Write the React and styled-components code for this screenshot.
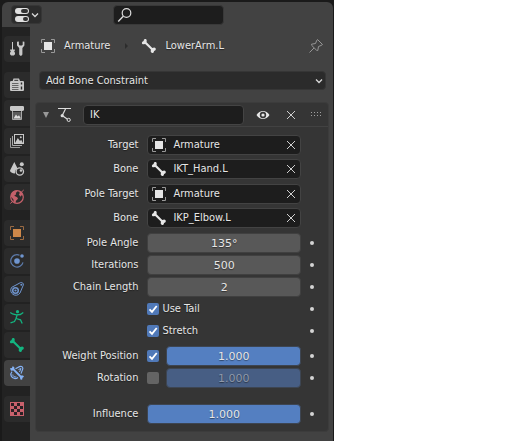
import React, { useState } from "react";
import styled, { createGlobalStyle, css } from "styled-components";

const GlobalStyle = createGlobalStyle`
  *, *::before, *::after { box-sizing: border-box; }
  body { margin: 0; background: #fff; }
  button, input { font: inherit; color: inherit; }
`;

const textShadow = "0 1px 1px rgba(0, 0, 0, 0.45)";

const Page = styled.div`
  display: grid;
  grid-template-columns: minmax(0, 7fr) minmax(0, 4fr);
  min-height: 100vh;
  font: 11px/14px "DejaVu Sans Condensed", "DejaVu Sans", sans-serif;
  color: #e6e6e6;
  text-shadow: ${textShadow};
`;

const Editor = styled.section`
  display: flex;
  flex-direction: column;
  padding: 2px 1px 0 2px;
  background: #1a1a1a;
`;

const Header = styled.header`
  display: flex;
  align-items: center;
  justify-content: space-between;
  height: 25px;
  padding: 0 109px 0 9px;
  background: #424242;
  border-radius: 6px 6px 0 0;
`;

const EditorButton = styled.button`
  display: flex;
  align-items: center;
  gap: 0;
  height: 19px;
  padding: 0 1px 0 2px;
  background: #2b2b2b;
  border: 1px solid #363636;
  border-radius: 4px;
`;

const Search = styled.label`
  display: flex;
  align-items: center;
  width: 111px;
  height: 20px;
  padding: 0 3px;
  background: #1d1d1d;
  border: 1px solid #393939;
  border-radius: 4px;
`;

const TextInput = styled.input`
  flex: 1;
  min-width: 0;
  width: 100%;
  padding: 0;
  border: 0;
  outline: 0;
  background: transparent;
  text-shadow: ${textShadow};
`;

const Body = styled.div`
  flex: 1;
  display: flex;
`;

const Tabs = styled.nav`
  display: flex;
  flex-direction: column;
  gap: 10px;
  width: 28px;
  padding: 9px 0 0 2px;
  background: #222;
`;

const TabGroup = styled.div`
  display: flex;
  flex-direction: column;
  gap: 2px;
`;

const Tab = styled.button`
  display: flex;
  align-items: center;
  height: 26px;
  padding: 0 5px;
  border: 0;
  border-radius: 4px 0 0 4px;
  background: ${(p) => (p.$active ? "#424242" : "#2b2b2b")};
`;

const Main = styled.main`
  flex: 1;
  min-width: 0;
  padding: 10px 4px 9px 5px;
  background: #424242;
`;

const Breadcrumb = styled.div`
  display: flex;
  align-items: center;
  height: 18px;
  padding: 0 5px;
`;

const Crumb = styled.span`
  display: flex;
  align-items: center;
  gap: 8px;
`;

const Separator = styled.span`
  display: flex;
  padding: 0 11px 0 12px;
`;

const IconButton = styled.button`
  display: flex;
  align-items: center;
  justify-content: center;
  padding: 0;
  border: 0;
  background: transparent;
  margin-left: ${(p) => (p.$end ? "auto" : "0")};
`;

const AddButton = styled.button`
  display: flex;
  align-items: center;
  justify-content: space-between;
  width: calc(100% - 7px);
  height: 19px;
  margin: 16px 3px 12px 4px;
  padding: 0 1px 0 6px;
  background: #2b2b2b;
  border: 1px solid #363636;
  border-radius: 4px;
  text-shadow: ${textShadow};
`;

const Panel = styled.section`
  background: #353535;
  border: 1px solid #3c3c3c;
  border-radius: 4px;
`;

const PanelHeader = styled.div`
  display: flex;
  align-items: center;
  height: 24px;
  padding: 0 5px 0 6px;
  border-bottom: 1px solid #424242;
`;

const ConstraintType = styled.span`
  display: flex;
  margin-left: 7px;
`;

const NameField = styled.label`
  flex: 1;
  display: flex;
  height: 20px;
  margin: 0 11px 0 10px;
  padding: 0 6px;
  background: #1d1d1d;
  border: 1px solid #444;
  border-radius: 4px;
`;

const PanelActions = styled.div`
  display: flex;
  align-items: center;
  gap: 15px;
`;

const PanelBody = styled.div`
  display: flex;
  flex-direction: column;
  padding: 6px 0;
`;

const RowGroup = styled.div`
  display: flex;
  flex-direction: column;
  margin-bottom: ${(p) => p.$after || 0}px;
`;

const Row = styled.div`
  display: grid;
  grid-template-columns: minmax(0, 2fr) minmax(0, 3fr) 18px;
  column-gap: 9px;
  align-items: center;
  height: ${(p) => (p.$tall ? 24 : 22)}px;
`;

const RowLabel = styled.label`
  text-align: right;
  white-space: nowrap;
`;

const Control = styled.div`
  display: flex;
  align-items: center;
  gap: ${(p) => p.$gap || 3}px;
  height: 20px;
`;

const boxed = css`
  flex: 1;
  min-width: 0;
  height: 20px;
  border: 1px solid #434343;
  border-radius: 4px;
`;

const ObjectField = styled.div`
  ${boxed}
  display: flex;
  align-items: center;
  gap: 6px;
  padding: 0 4px 0 3px;
  background: #1d1d1d;
`;

const NumberInput = styled.input`
  ${boxed}
  padding: 0;
  outline: 0;
  text-align: center;
  font-family: "DejaVu Sans", sans-serif;
  text-shadow: ${textShadow};
  background: ${(p) => (p.$slider ? "#547fc1" : "#585858")};
  border-color: ${(p) => (p.$slider ? "#3d4552" : "#404040")};
  color: #e6e6e6;
  &:disabled {
    background: #475e84;
    color: #8f99aa;
  }
`;

const Check = styled.input`
  appearance: none;
  flex: none;
  width: 12px;
  height: 12px;
  margin: 0;
  border-radius: 2px;
  background: #646464;
  &:checked {
    background: #5079b8
      url("data:image/svg+xml,%3Csvg xmlns='http://www.w3.org/2000/svg' viewBox='0 0 12 12'%3E%3Cpath d='M2.5 6.3 5 8.8 9.7 3' fill='none' stroke='white' stroke-width='1.8'/%3E%3C/svg%3E");
  }
`;

const Dot = styled.span`
  width: 4px;
  height: 4px;
  border-radius: 50%;
  background: #d4d4d4;
`;

const Svg = ({ children, size = 16, color = "#c8c8c8" }) => (
  <svg width={size} height={size} viewBox={`0 0 ${size} ${size}`} fill="none" stroke={color} color={color} aria-hidden="true">
    {children}
  </svg>
);

const solid = { fill: "currentColor", stroke: "none" };

const ToolIcon = () => (
  <Svg>
    <path d="M3.500 1v8" />
    <path {...solid} d="M1.200 8.500h4.600v1.300l-.7.8.9 1.200v1.400L4.800 14.500H2.200L1 13.200v-1.400l.9-1.200-.7-.8z" />
    <path {...solid} d="M8 .8v3.700L10.200 7v6.500l1 1.200h1.200l1-1.200V7l2-2.500V.8L13.700.5v3.300l-.8.7h-2.200l-.8-.7V.5z" />
  </Svg>
);

const RenderIcon = () => (
  <Svg>
    <path {...solid} d="M4.500 1.500H10l1 2.500h3.200l.8.8v8.500l-.8.8H1.800l-.8-.8V4.800l.8-.8h1.900z" />
    <path d="M5.300 3.300h3.900" stroke="#2b2b2b" />
    <path d="M3 6.500h6.500M3 8.500h6.500M3 10.500h6.500M3 12.500h6.500" stroke="#666" />
    <path d="M12.500 5.500v2M12.500 9.500v3" stroke="#2b2b2b" strokeWidth="1.400" />
  </Svg>
);

const OutputIcon = () => (
  <Svg>
    <path {...solid} d="M1.700 1h12.600l.7.7v3.600l-1.500.7h-11L1 5.300V1.700z" />
    <path d="M3.500 6v8.500h9V6" fill="#5a5a5a" stroke="#a8a8a8" />
    <path d="M4.500 13.500l2.500-4 1.500 2 1.500-1.300 2 3.300z" fill="#ddd" stroke="none" />
    <path d="M4 6.500h8" stroke="#2b2b2b" />
  </Svg>
);

const LayerIcon = () => (
  <Svg>
    <path d="M1.500 5v9.500H11" stroke="#999" />
    <path d="M3.500 3v9.500H13" stroke="#aaa" />
    <rect x="5.500" y="1.500" width="9" height="9" />
    <path {...solid} d="M6 10l2.800-5 2.200 3 1.200-1.200L14 10z" />
    <circle {...solid} cx="11.800" cy="4.300" r="1" />
  </Svg>
);

const SceneIcon = () => (
  <Svg>
    <path {...solid} d="M5.300 1 1 9.500c0 1.700 2.200 2.900 5 2.900C6 9.500 7 8.200 8.600 7.500z" />
    <circle {...solid} cx="12.800" cy="3.300" r="2" />
    <circle cx="10.800" cy="10.500" r="3.700" strokeWidth="1.300" />
    <circle {...solid} cx="12" cy="9.500" r="1.300" />
  </Svg>
);

const WorldIcon = () => (
  <Svg color="#c4606a">
    <circle cx="8" cy="8" r="6.300" strokeWidth="1.200" />
    <path {...solid} d="M2 5.500 4.500 2.300l2.700-.8 1.300 1.300-1.700 1 .4 1.500-2 1.500 3 1.400.8 1.500-2 2-.6 2.500-1.500-.6-.6-3.300L2 7.800z" />
    <path {...solid} d="M10.500 2l2.500 1.500 1.300 3.200-1.800-.4-.8 1.500-1.800-2 .7-1.500z" />
    <path d="M12 3.500 14.700 1M1.300 14.500 3.800 12.300" />
  </Svg>
);

const ObjectIcon = ({ color = "#e6e6e6", frame = "#999" }) => (
  <Svg color={color}>
    <path d="M1.500 5V1.500H5M11 1.500h3.500V5M14.500 11v3.500H11M5 14.500H1.500V11" stroke={frame} />
    <rect {...solid} x="4" y="4" width="8" height="8" />
  </Svg>
);

const PhysicsIcon = () => (
  <Svg color="#6f95cf">
    <path d="M10.500 2.200A6.200 6.200 0 1 0 14 9.300" stroke="#5d7bab" strokeWidth="1.200" />
    <circle {...solid} cx="8" cy="8" r="2.800" />
    <circle {...solid} cx="13" cy="3" r="1.800" />
  </Svg>
);

const ConstraintIcon = () => (
  <Svg color="#6f95cf">
    <circle cx="6.500" cy="9.500" r="2.800" strokeWidth="1.500" />
    <circle {...solid} cx="6.500" cy="9.500" r="1.100" />
    <path d="M2.600 6.400 11.500 1.600c1.700-.5 3.200.7 2.800 2.500L11 12A5 5 0 1 1 2.600 6.400z" />
    <circle {...solid} cx="12.300" cy="3.700" r="1" />
  </Svg>
);

const ArmatureIcon = () => (
  <Svg color="#13b580">
    <circle {...solid} cx="8.500" cy="2.700" r="1.600" />
    <path d="M1.300 3.500 3.500 5l3.800.8 4-.3 3-2M8.300 5.500 7 9.500l-1.500 3-4 1.300M7 9.500l4.500 1.300 1.700 3.700" strokeWidth="1.300" />
  </Svg>
);

const BoneIcon = ({ color = "#e6e6e6" }) => (
  <Svg color={color}>
    <path
      {...solid}
      d="M2.800 2.600C2.600.8 5.400.5 5.700 2.300L5.600 4.200l5.700 5.700 1.900-.3c2 .2 2.200 2.700.4 3.200l-.6.200-.1.700c-.3 1.900-3 1.700-3.200-.1l.2-2L4.200 6l-1.700.3C.5 6.200.4 3.600 2.300 3.200z"
    />
  </Svg>
);

const BoneConstraintIcon = () => (
  <Svg color="#86b3f5">
    <path
      {...solid}
      d="M1 3.200 3 3l.5-1.800 1.700.7.2 2L12 10.500l2-.1 1 1.300-1.500 1-.4 2-1.700-.2-.5-2.200-6.600-6.700L2 5.800z"
    />
    <path d="M6.500 3.700 10.500 1.600c2.300-.9 4 .7 3.100 2.800L12 8.600M3 6.600C.6 9.300 2.300 13.500 6 13.600c1.200 0 2.200-.4 3-1.100" strokeWidth="1.200" />
    <path d="M9.500 4.500 12 3.500 10.500 7M3.800 9.500a2.500 2.500 0 0 0 3.500 2.300" />
  </Svg>
);

const TextureIcon = () => (
  <Svg>
    <rect x="1" y="1" width="14" height="14" fill="#c9616c" stroke="none" />
    {[0, 1, 2, 3].flatMap((r) =>
      [0, 1, 2, 3].map((c) =>
        (r + c) % 2 ? null : <rect key={`${r}${c}`} x={2 + c * 3} y={2 + r * 3} width="3" height="3" fill="#2b2024" stroke="none" />
      )
    )}
  </Svg>
);

const EditorIcon = () => (
  <Svg>
    <rect x="1" y="1" width="14" height="6" rx="3" fill="#e0e0e0" stroke="none" />
    <rect x="7" y="2" width="7" height="4" rx="2" fill="#333" stroke="none" />
    <rect x="1" y="9" width="14" height="6" rx="3" fill="#e0e0e0" stroke="none" />
    <rect x="9" y="10" width="5" height="4" rx="2" fill="#333" stroke="none" />
  </Svg>
);

const SearchIcon = () => (
  <Svg color="#dcdcdc">
    <circle cx="9.500" cy="6" r="4.300" strokeWidth="1.200" />
    <path d="M6.300 9.200 1.200 14.500" strokeWidth="1.400" />
  </Svg>
);

const ChevronIcon = () => (
  <Svg size={10} color="#d8d8d8">
    <path d="M2 3.500 5 6.500 8 3.500" strokeWidth="1.300" />
  </Svg>
);

const PinIcon = () => (
  <Svg color="#969696">
    <path d="M9.500 1.500 14.500 6.500 13 7.500 10.500 8.500 9.800 12.500 8.500 12.200 3.800 7.500 3.500 6.200 7.500 5.500 8.500 3zM6 10 1.500 14.500" />
  </Svg>
);

const CrossIcon = () => (
  <Svg size={10} color="#cfcfcf">
    <path d="M1 1l8 8M9 1L1 9" />
  </Svg>
);

const IkIcon = () => (
  <Svg color="#dcdcdc">
    <path d="M1 1.500h13" />
    <path d="M8.500 2 5.200 8.500l5.300 3.700" strokeWidth="1.200" />
    <circle {...solid} cx="5.200" cy="8.700" r="1.600" />
    <circle cx="11.700" cy="12.900" r="1.600" />
  </Svg>
);

const EyeIcon = () => (
  <Svg color="#e6e6e6">
    <path {...solid} fillRule="evenodd" d="M1.500 8C4.700 2.700 11.300 2.700 14.500 8 11.300 13.300 4.700 13.300 1.500 8zM8 4.800a3.200 3.200 0 1 0 0 6.400 3.200 3.200 0 1 0 0-6.400z" />
    <circle {...solid} cx="8" cy="8" r="1.600" />
  </Svg>
);

const GripIcon = () => (
  <svg width="12" height="8" viewBox="0 0 12 8" fill="#a0a0a0" aria-hidden="true">
    {[0, 3, 6, 9].flatMap((x) => [1, 4].map((y) => <rect key={`${x}${y}`} x={x} y={y} width="1" height="1" />))}
  </svg>
);

const TriangleIcon = ({ right }) => (
  <svg width="8" height="8" viewBox="0 0 8 8" fill={right ? "#2c2c2c" : "#989898"} aria-hidden="true">
    <path d={right ? "M3 1 6 4 3 7z" : "M1 1h6L4 7z"} />
  </svg>
);

const TAB_GROUPS = [
  [["Tool", <ToolIcon />]],
  [
    ["Render", <RenderIcon />],
    ["Output", <OutputIcon />],
    ["View Layer", <LayerIcon />],
    ["Scene", <SceneIcon />],
    ["World", <WorldIcon />],
  ],
  [
    ["Object", <ObjectIcon color="#cf8849" frame="#9a6a42" />],
    ["Physics", <PhysicsIcon />],
    ["Object Constraints", <ConstraintIcon />],
    ["Armature Data", <ArmatureIcon />],
    ["Bone", <BoneIcon color="#13b580" />],
    ["Bone Constraints", <BoneConstraintIcon />],
  ],
  [["Texture", <TextureIcon />]],
];

const OBJECT_GROUPS = [
  { after: 1, rows: [["Target", "Armature", ObjectIcon], ["Bone", "IKT_Hand.L", BoneIcon]] },
  { after: 2, rows: [["Pole Target", "Armature", ObjectIcon], ["Bone", "IKP_Elbow.L", BoneIcon]] },
];

const NUMBERS = [
  ["Pole Angle", "135°"],
  ["Iterations", "500"],
  ["Chain Length", "2"],
];

function ObjectRow({ id, label, value, Icon }) {
  return (
    <Row $tall>
      <RowLabel htmlFor={id}>{label}</RowLabel>
      <Control>
        <ObjectField>
          <Icon />
          <TextInput id={id} defaultValue={value} />
          <IconButton aria-label={`Clear ${label}`}>
            <CrossIcon />
          </IconButton>
        </ObjectField>
      </Control>
    </Row>
  );
}

function NumberRow({ id, label, value, slider }) {
  return (
    <Row>
      <RowLabel htmlFor={id}>{label}</RowLabel>
      <Control>
        <NumberInput id={id} defaultValue={value} $slider={slider} />
      </Control>
      <Dot />
    </Row>
  );
}

function ToggleRow({ id, label }) {
  return (
    <Row>
      <span />
      <Control>
        <Check type="checkbox" id={id} defaultChecked />
        <label htmlFor={id}>{label}</label>
      </Control>
      <Dot />
    </Row>
  );
}

function WeightRow({ id, label, initial }) {
  const [on, setOn] = useState(initial);
  return (
    <Row>
      <RowLabel htmlFor={id}>{label}</RowLabel>
      <Control $gap={7}>
        <Check type="checkbox" id={id} checked={on} onChange={(e) => setOn(e.target.checked)} />
        <NumberInput aria-label={`${label} value`} defaultValue="1.000" $slider disabled={!on} />
      </Control>
      <Dot />
    </Row>
  );
}

export default function App() {
  return (
    <Page>
      <GlobalStyle />
      <Editor>
        <Header>
          <EditorButton aria-label="Editor type">
            <EditorIcon />
            <ChevronIcon />
          </EditorButton>
          <Search>
            <SearchIcon />
            <TextInput aria-label="Search" />
          </Search>
        </Header>
        <Body>
          <Tabs>
            {TAB_GROUPS.map((group, i) => (
              <TabGroup key={i}>
                {group.map(([name, icon]) => (
                  <Tab key={name} aria-label={name} $active={name === "Bone Constraints"}>
                    {icon}
                  </Tab>
                ))}
              </TabGroup>
            ))}
          </Tabs>
          <Main>
            <Breadcrumb>
              <Crumb>
                <ObjectIcon />
                Armature
              </Crumb>
              <Separator>
                <TriangleIcon right />
              </Separator>
              <Crumb>
                <BoneIcon />
                LowerArm.L
              </Crumb>
              <IconButton $end aria-label="Pin">
                <PinIcon />
              </IconButton>
            </Breadcrumb>
            <AddButton>
              Add Bone Constraint
              <ChevronIcon />
            </AddButton>
            <Panel>
              <PanelHeader>
                <IconButton aria-label="Collapse">
                  <TriangleIcon />
                </IconButton>
                <ConstraintType>
                  <IkIcon />
                </ConstraintType>
                <NameField>
                  <TextInput aria-label="Constraint name" defaultValue="IK" />
                </NameField>
                <PanelActions>
                  <IconButton aria-label="Toggle visibility">
                    <EyeIcon />
                  </IconButton>
                  <IconButton aria-label="Remove">
                    <CrossIcon />
                  </IconButton>
                  <GripIcon />
                </PanelActions>
              </PanelHeader>
              <PanelBody>
                {OBJECT_GROUPS.map((group, g) => (
                  <RowGroup key={g} $after={group.after}>
                    {group.rows.map(([label, value, Icon], r) => (
                      <ObjectRow key={label} id={`object-${g}-${r}`} label={label} value={value} Icon={Icon} />
                    ))}
                  </RowGroup>
                ))}
                <RowGroup $after={3}>
                  {NUMBERS.map(([label, value], n) => (
                    <NumberRow key={label} id={`number-${n}`} label={label} value={value} />
                  ))}
                  <ToggleRow id="use-tail" label="Use Tail" />
                  <ToggleRow id="stretch" label="Stretch" />
                </RowGroup>
                <RowGroup $after={14}>
                  <WeightRow id="weight-position" label="Weight Position" initial />
                  <WeightRow id="weight-rotation" label="Rotation" initial={false} />
                </RowGroup>
                <NumberRow id="influence" label="Influence" value="1.000" slider />
              </PanelBody>
            </Panel>
          </Main>
        </Body>
      </Editor>
    </Page>
  );
}
